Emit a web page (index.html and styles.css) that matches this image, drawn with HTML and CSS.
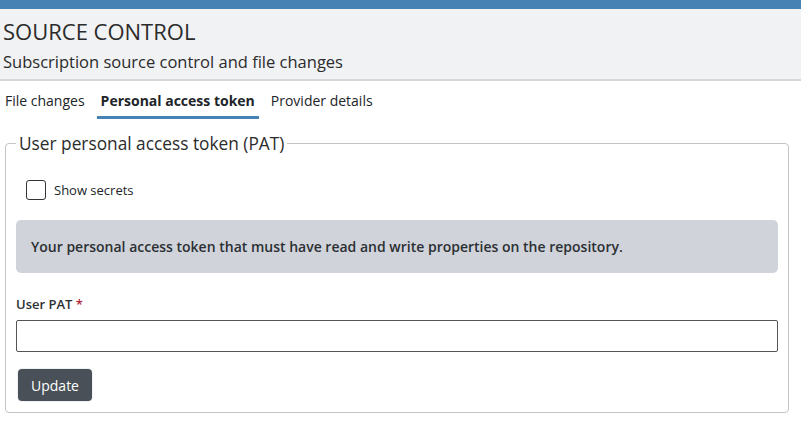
FILE: index.html
```html
<!DOCTYPE html>
<html>
<head>
<meta charset="utf-8">
<link rel="stylesheet" href="styles.css">
</head>
<body>
<div class="topbar"></div>
<header class="header">
  <h1 class="title">SOURCE CONTROL</h1>
  <div class="subtitle">Subscription source control and file changes</div>
</header>
<nav class="tabs">
  <span class="tab">File changes</span>
  <span class="tab active">Personal access token</span>
  <span class="tab">Provider details</span>
</nav>
<fieldset class="panel">
  <legend class="legend">User personal access token (PAT)</legend>
  <label class="check">
    <span class="box"></span>
    <span class="check-label">Show secrets</span>
  </label>
  <div class="alert">Your personal access token that must have read and write properties on the repository.</div>
  <div class="field-label">User PAT <span class="req">*</span></div>
  <div class="input"></div>
  <button class="btn">Update</button>
</fieldset>
</body>
</html>
```
FILE: styles.css
```css
* { box-sizing: border-box; }
body {
  margin: 0;
  font-family: "Open Sans", "Noto Sans", sans-serif;
  color: #212529;
  background: #fff;
}
.topbar { height: 9px; background: #4682b4; }
.header {
  background: #f1f2f4;
  border-bottom: 2px solid #d6d6d6;
  padding: 8px 0 0 3px;
  height: 72px;
}
.title {
  margin: 0;
  font-size: 22px;
  font-weight: 400;
  color: #2b2b2b;
  line-height: 28px;
}
.subtitle {
  font-size: 16.5px;
  line-height: 24px;
  margin-top: 5px;
  color: #2b2b2b;
}
.tabs {
  display: flex;
  padding: 10px 0 0 5px;
  height: 38px;
}
.tab {
  font-size: 14px;
  line-height: 20px;
  padding-bottom: 6px;
  margin-right: 16px;
  color: #212529;
}
.tab.active {
  font-weight: 700;
  border-bottom: 3px solid #4682b4;
  padding: 0 4px 5px;
  margin-left: -4px;
  margin-right: 12px;
}
.panel {
  margin: 13px 0 0 5px;
  width: 784px;
  border: 1px solid #c4c4c4;
  border-radius: 4px;
  padding: 12px 10px 11px 10px;
  height: 281px;
}
.legend {
  font-size: 17.3px;
  padding: 0 3px;
  margin-left: 0;
  color: #2b2b2b;
}
.check {
  display: flex;
  align-items: center;
  margin: 13px 0 0 10px;
  height: 20px;
}
.box {
  width: 20px; height: 20px;
  border: 1px solid #333;
  border-radius: 3px;
  background: #fff;
}
.check-label {
  font-size: 13px;
  margin-left: 8px;
  color: #212529;
}
.alert {
  margin-top: 20px;
  background: #d0d4da;
  border-radius: 5px;
  height: 53px;
  padding: 0 15px;
  display: flex;
  align-items: center;
  font-size: 14px;
  font-weight: 600;
  color: #2b2f33;
}
.field-label {
  margin-top: 22px;
  font-size: 13px;
  font-weight: 600;
  line-height: 18px;
  color: #2b2f33;
}
.req { color: #b02a37; }
.input {
  margin-top: 7px;
  height: 32px;
  border: 1px solid #555;
  border-radius: 2px;
}
.btn {
  margin: 17px 0 0 2px;
  height: 32px;
  width: 74px;
  border: none;
  border-radius: 4px;
  background: #495057;
  color: #fff;
  font-family: inherit;
  font-size: 14px;
  box-shadow: 0 0 0 1px #eef0f2;
}
```
